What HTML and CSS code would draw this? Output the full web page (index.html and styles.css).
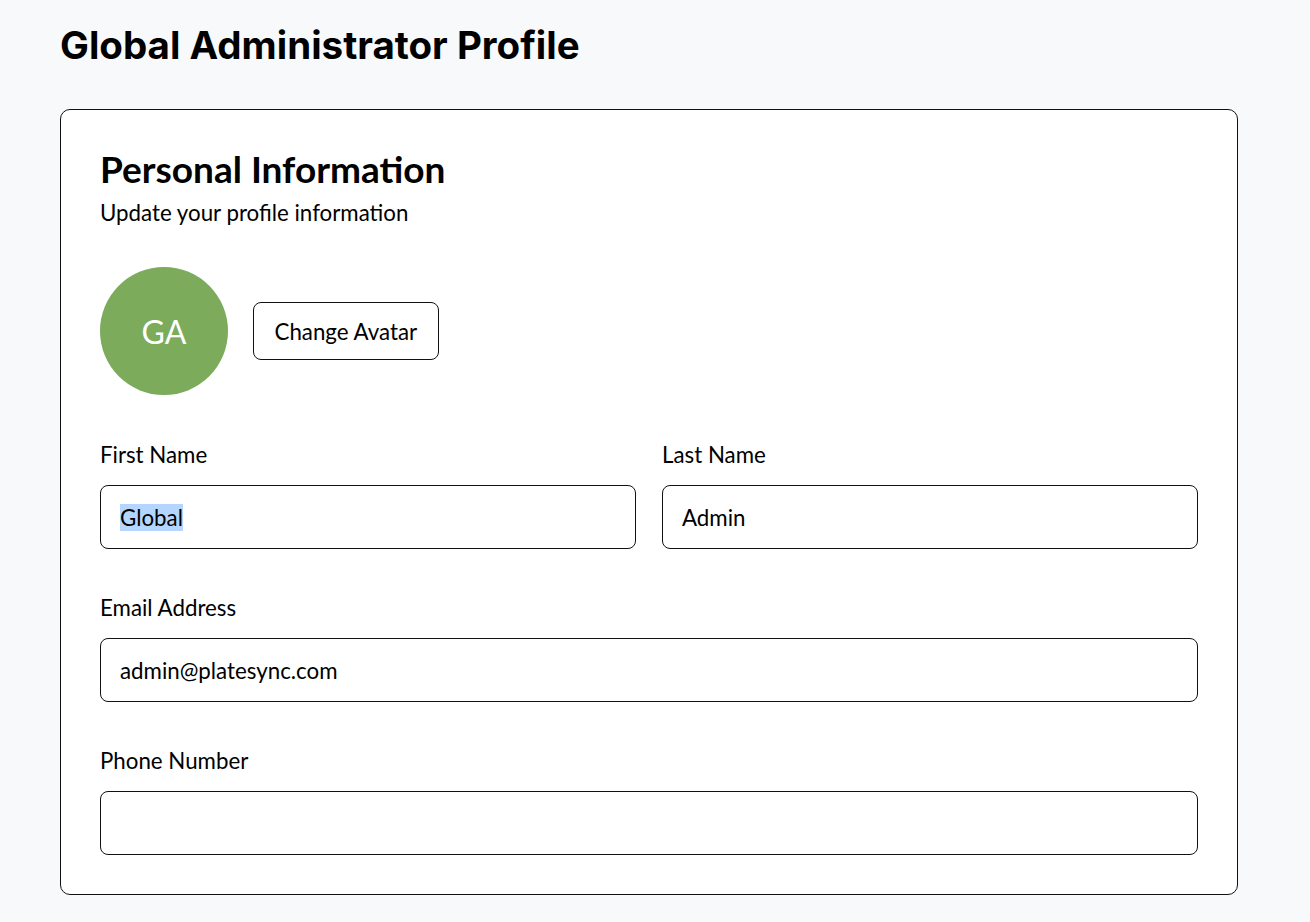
FILE: index.html
```html
<!DOCTYPE html>
<html lang="en">
<head>
<meta charset="utf-8">
<title>Global Administrator Profile</title>
<link rel="stylesheet" href="styles.css">
</head>
<body>
<main class="page">
  <h1 class="page-title">Global Administrator Profile</h1>
  <section class="card">
    <h2 class="card-title">Personal Information</h2>
    <p class="card-subtitle">Update your profile information</p>
    <div class="avatar-row">
      <div class="avatar">GA</div>
      <button class="btn-outline" type="button">Change Avatar</button>
    </div>
    <div class="form">
      <div class="form-row two-col">
        <label class="field">
          <span class="field-label">First Name</span>
          <input id="firstName" class="field-input" type="text" value="Global">
        </label>
        <label class="field">
          <span class="field-label">Last Name</span>
          <input class="field-input" type="text" value="Admin">
        </label>
      </div>
      <label class="field">
        <span class="field-label">Email Address</span>
        <input class="field-input" type="email" value="admin@platesync.com">
      </label>
      <label class="field">
        <span class="field-label">Phone Number</span>
        <input class="field-input" type="tel" value="">
      </label>
    </div>
  </section>
</main>
<script src="script.js"></script>
</body>
</html>
```

FILE: styles.css
```css
* { box-sizing: border-box; }
html, body { margin: 0; padding: 0; }
body {
  background: #f8f9fb;
  color: #000;
  font-family: Lato, "Noto Sans", sans-serif;
}
.page {
  padding: 25px 72px 0 60px;
}
.page-title {
  margin: 0 0 44px;
  font-family: Inter, "Liberation Sans", sans-serif;
  font-weight: 700;
  font-size: 38.5px;
  line-height: 40px;
  letter-spacing: 0;
}
.card {
  background: #fff;
  border: 1px solid #111;
  border-radius: 10px;
  padding: 37px 39px 39px;
}
.card-title {
  margin: 0 0 10px;
  font-size: 37px;
  line-height: 44px;
  font-weight: 700;
}
.card-subtitle {
  margin: 0;
  font-size: 22.3px;
  line-height: 24px;
}
.avatar-row {
  display: flex;
  align-items: center;
  gap: 25px;
  margin-top: 42px;
}
.avatar {
  width: 128px;
  height: 128px;
  border-radius: 50%;
  background: #7bab5b;
  color: #fff;
  display: flex;
  align-items: center;
  justify-content: center;
  font-size: 32px;
}
.btn-outline {
  height: 58px;
  padding: 0 20.5px;
  background: #fff;
  border: 1px solid #111;
  border-radius: 8px;
  font-family: inherit;
  font-size: 22.3px;
  color: #000;
}
.form {
  margin-top: 48px;
  display: flex;
  flex-direction: column;
  gap: 47px;
}
.two-col {
  display: grid;
  grid-template-columns: 1fr 1fr;
  gap: 26px;
}
.field {
  display: flex;
  flex-direction: column;
  gap: 18px;
}
.field-label {
  font-size: 22.3px;
  line-height: 24px;
}
.field-input {
  height: 64px;
  width: 100%;
  padding: 0 19px;
  border: 1px solid #111;
  border-radius: 8px;
  background: #fff;
  font-family: inherit;
  font-size: 22.3px;
  color: #000;
  outline: none;
}
.field-input::selection {
  background: #b4d5fe;
  color: #000;
}
```

FILE: script.js
```js
var el = document.getElementById('firstName');
el.focus();
el.setSelectionRange(0, el.value.length);
```
